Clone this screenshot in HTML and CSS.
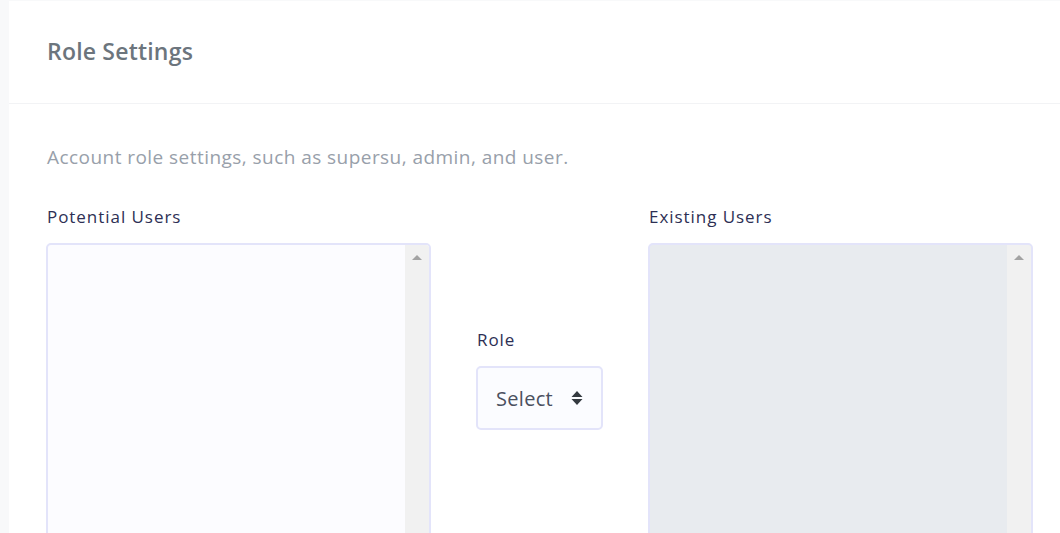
FILE: index.html
```html
<!DOCTYPE html>
<html>
<head>
<meta charset="utf-8">
<link rel="stylesheet" href="styles.css">
</head>
<body>
<div class="page">
  <div class="card">
    <div class="card-header">
      <h4 class="title">Role Settings</h4>
    </div>
    <div class="card-body">
      <p class="desc">Account role settings, such as supersu, admin, and user.</p>
      <div class="roles">
        <div class="col">
          <label class="label">Potential Users</label>
          <div class="listbox">
            <div class="list-area"></div>
            <div class="scrollbar"><span class="arrow"></span></div>
          </div>
        </div>
        <div class="mid">
          <label class="label">Role</label>
          <div class="select">
            <span class="select-text">Select</span>
            <svg class="caret" width="12" height="16" viewBox="0 0 12 16"><path d="M6 1 L11.5 7 H0.5 Z M6 15 L11.5 9 H0.5 Z" fill="#343a40"/></svg>
          </div>
        </div>
        <div class="col">
          <label class="label">Existing Users</label>
          <div class="listbox disabled">
            <div class="list-area"></div>
            <div class="scrollbar"><span class="arrow"></span></div>
          </div>
        </div>
      </div>
    </div>
  </div>
</div>
</body>
</html>
```

FILE: styles.css
```css
html, body {
  margin: 0;
  padding: 0;
  background: #f8f9fa;
  font-family: "Open Sans", "Noto Sans", sans-serif;
  height: 100%;
  overflow: hidden;
}
.page {
  padding-left: 9px;
  padding-top: 1px;
}
.card {
  background: #ffffff;
  min-height: 600px;
  width: 1100px;
}
.card-header {
  border-bottom: 1px solid #f2f3f5;
  display: flex;
  align-items: center;
  padding-left: 38px;
  box-sizing: border-box;
  height: 103px;
}
.title {
  margin: 0;
  font-size: 23px;
  font-weight: 600;
  letter-spacing: 0.2px;
  color: #6c757d;
  padding-bottom: 2px;
}
.card-body {
  padding: 0 0 0 37px;
}
.desc {
  margin: 0;
  padding-top: 41px;
  font-size: 19px;
  letter-spacing: 0.45px;
  color: #98a0aa;
  line-height: 24px;
  padding-left: 1px;
}
.roles {
  display: flex;
  align-items: center;
  gap: 45px;
  margin-top: 37px;
}
.col {
  width: 385px;
  display: flex;
  flex-direction: column;
}
.label {
  display: block;
  font-size: 17px;
  color: #2d2f54;
  letter-spacing: 0.95px;
  line-height: 22px;
  margin-bottom: 15px;
  padding-left: 1px;
}
.listbox {
  height: 310px;
  border: 2px solid #e3e4fa;
  border-radius: 5px;
  background: #fcfcff;
  display: flex;
  overflow: hidden;
  box-sizing: border-box;
}
.listbox.disabled {
  background: #e8ebef;
}
.list-area {
  flex: 1;
}
.scrollbar {
  width: 24px;
  background: #f1f1f1;
  position: relative;
}
.arrow {
  position: absolute;
  top: 10px;
  left: 7px;
  width: 0;
  height: 0;
  border-left: 5px solid transparent;
  border-right: 5px solid transparent;
  border-bottom: 5px solid #a3a3a3;
}
.mid {
  width: 127px;
  display: flex;
  flex-direction: column;
}
.mid .label {
  margin-bottom: 15px;
}
.select {
  height: 64px;
  box-sizing: border-box;
  border: 2px solid #e3e4fa;
  border-radius: 5px;
  background: #fbfcff;
  display: flex;
  align-items: center;
  padding-left: 18px;
  padding-right: 18px;
  justify-content: space-between;
}
.select-text {
  font-size: 20px;
  letter-spacing: 0.3px;
  color: #4a5060;
}
.caret {
  display: block;
}
```
